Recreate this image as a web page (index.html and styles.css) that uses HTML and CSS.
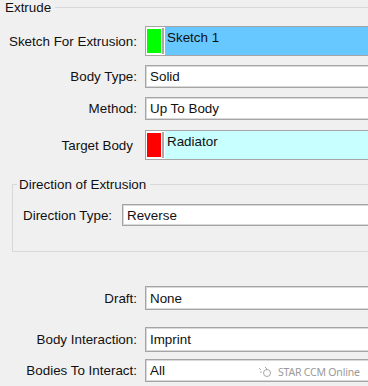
FILE: index.html
```html
<!DOCTYPE html>
<html lang="en">
<head>
    <meta charset="UTF-8">
    <meta name="viewport" content="width=device-width, initial-scale=1.0">
    <title>Extrude</title>
    <link rel="stylesheet" href="styles.css">
</head>
<body>
    <fieldset class="group">
        <legend>Extrude</legend>

        <div class="row row-sketch">
            <label>Sketch For Extrusion:</label>
            <div class="field pick">
                <span class="swatch green"></span>
                <span class="pick-text blue">Sketch 1</span>
            </div>
        </div>
        <div class="row row-type">
            <label>Body Type:</label>
            <div class="field">Solid</div>
        </div>
        <div class="row row-method">
            <label>Method:</label>
            <div class="field">Up To Body</div>
        </div>
        <div class="row row-target">
            <label class="no-colon">Target Body</label>
            <div class="field pick">
                <span class="swatch red"></span>
                <span class="pick-text cyan">Radiator</span>
            </div>
        </div>

        <fieldset class="subgroup">
            <legend>Direction of Extrusion</legend>
            <div class="row row-dir">
                <label>Direction Type:</label>
                <div class="field">Reverse</div>
            </div>
        </fieldset>

        <div class="row row-draft">
            <label>Draft:</label>
            <div class="field">None</div>
        </div>
        <div class="row row-inter">
            <label>Body Interaction:</label>
            <div class="field">Imprint</div>
        </div>
        <div class="row row-bodies">
            <label>Bodies To Interact:</label>
            <div class="field">All</div>
        </div>
    </fieldset>

    <!-- watermark from the source screenshot -->
    <div class="watermark">
        <svg width="14" height="12" viewBox="0 0 14 12">
            <path d="M1 2 L3 4 M2 6 L4 6" stroke="#b5b5b5" stroke-width="1" fill="none"/>
            <circle cx="9" cy="7" r="3.5" stroke="#a8a8a8" stroke-width="1" fill="none"/>
            <path d="M7 1 L9 3 L8 4" stroke="#a8a8a8" stroke-width="1" fill="none"/>
        </svg>
        <span>STAR CCM Online</span>
    </div>
</body>
</html>
```

FILE: styles.css
```css
body {
    margin: 0;
    background: #f0f0f0;
    font-family: "Liberation Sans", Arial, sans-serif;
    font-size: 13.4px;
    color: #111;
    overflow: hidden;
    position: relative;
    height: 386px;
}
.group {
    margin: 0;
    padding: 0;
    border: none;
    border-top: 1px solid #d8d8d8;
    min-width: 0;
}
.group > legend {
    padding: 0 4px 0 5px;
    margin-left: 0;
    line-height: 15px;
}
.row {
    display: flex;
    align-items: center;
}
.row label {
    width: 137px;
    text-align: right;
    flex-shrink: 0;
    white-space: nowrap;
}
.field {
    margin-left: 8px;
    flex: 1;
    min-width: 0;
    height: 23px;
    box-sizing: border-box;
    background: #fff;
    border: 1px solid #a5a5a5;
    border-right: none;
    box-shadow: inset 1px 1px 0 #d9d9d9, inset 0 -1px 0 #d9d9d9;
    padding: 0 4px;
    display: flex;
    align-items: center;
    white-space: nowrap;
    overflow: hidden;
}
.pick {
    height: 30px;
    padding: 0;
    align-items: stretch;
    box-shadow: none;
}
.swatch {
    width: 14px;
    margin: 1px 0;
    border: 1px solid #fff;
}
.pick .swatch {
    margin-right: 2px;
    box-shadow: 2px 0 0 #a8a8a8;
}
.green { background: #00ff00; }
.red { background: #ff0000; }
.pick-text {
    flex: 1;
    padding: 3px 0 0 2px;
    margin-left: 1px;
}
.blue { background: #66c8ff; }
.cyan { background: #c8ffff; }

.row-sketch { margin-top: 11px; }
.row-type { margin-top: 9px; }
.row-method { margin-top: 9px; }
.row-target { margin-top: 10px; }
.row-target label { width: 133px; padding-right: 4px; }

.subgroup {
    margin: 17px 0 0 12px;
    padding: 0 0 25px 10px;
    border: 1px solid #d8d8d8;
    border-right: none;
    min-width: 0;
}
.subgroup > legend {
    padding: 0 4px 0 2px;
    margin-left: -6px;
    line-height: 15px;
}
.row-dir { margin-top: 12px; }
.row-dir label { width: 89px; }
.row-dir .field { margin-left: 10px; height: 22px; }

.row-draft { margin-top: 34px; }
.row-draft .field { height: 24px; }
.row-inter { margin-top: 17px; }
.row-inter .field { height: 25px; }
.row-bodies { margin-top: 7px; }

.watermark {
    position: absolute;
    left: 258px;
    top: 365px;
    display: flex;
    align-items: center;
    gap: 6px;
    color: #9a9a9a;
    font-family: "Noto Sans", sans-serif;
    font-size: 10.5px;
    letter-spacing: -0.2px;
}
```
